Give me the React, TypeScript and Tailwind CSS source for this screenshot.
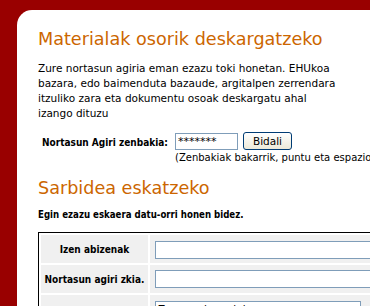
const bold = { fontFamily: "'DejaVu Sans Condensed', 'DejaVu Sans', Verdana, sans-serif" };

export default function App() {
  return (
    <div className="h-[306px] w-[370px] overflow-hidden bg-[#990000] pt-[10px] pl-[17px]" style={{ fontFamily: "'DejaVu Sans', Verdana, sans-serif" }}>
      <div className="w-[420px] rounded-tl-[15px] bg-white pl-[21px] pt-[18px] pb-10 text-[10.5px] text-black">
        <h1 className="text-[17.6px] leading-[22px] text-[#cc6600]">Materialak osorik deskargatzeko</h1>
        <p className="mt-[11px] whitespace-nowrap leading-[15px]">
          Zure nortasun agiria eman ezazu toki honetan. EHUkoa
          <br />
          bazara, edo baimenduta bazaude, argitalpen zerrendara
          <br />
          itzuliko zara eta dokumentu osoak deskargatu ahal
          <br />
          izango dituzu
        </p>
        <div className="mt-[11px] flex">
          <div className="w-[137px] whitespace-nowrap pl-[4px] pt-[3px] text-[10px] font-bold" style={bold}>Nortasun Agiri zenbakia:</div>
          <div>
            <div className="flex items-center gap-[5px]">
              <input
                type="text"
                readOnly
                value="*******"
                className="h-[17px] w-[63px] border border-[#7f9db9] px-[2px] text-[11px] outline-none"
                style={{ fontFamily: "'DejaVu Sans', Verdana, sans-serif" }}
              />
              <button className="h-[18px] w-[49px] rounded-[3px] border border-[#003c74] bg-gradient-to-b from-white to-[#ece9d8] text-[10.5px] leading-[16px]">
                Bidali
              </button>
            </div>
            <div className="mt-[2px] whitespace-nowrap text-[10px] leading-[12px]">(Zenbakiak bakarrik, puntu eta espazio gabe)</div>
          </div>
        </div>
        <h2 className="mt-[13px] text-[17.6px] leading-[22px] text-[#cc6600]">Sarbidea eskatzeko</h2>
        <p className="mt-[9px] text-[9.6px] font-bold leading-[14px]" style={bold}>Egin ezazu eskaera datu-orri honen bidez.</p>
        <table className="mt-[10px] w-[360px] border-separate border-spacing-[2px] border border-black">
          <tbody>
            <tr>
              <td className="h-[28px] w-[107px] bg-[#f0f0f0] text-center text-[10px] font-bold whitespace-nowrap" style={bold}>Izen abizenak</td>
              <td className="bg-[#f0f0f0] pl-[5px] pt-[6px] pb-[4px]">
                <div className="h-[18px] w-[216px] border border-[#7f9db9] bg-white"></div>
              </td>
            </tr>
            <tr>
              <td className="h-[28px] bg-[#f0f0f0] text-center text-[10px] font-bold whitespace-nowrap" style={bold}>Nortasun agiri zkia.</td>
              <td className="bg-[#f0f0f0] pl-[5px] pt-[5px] pb-[5px]">
                <div className="h-[18px] w-[216px] border border-[#7f9db9] bg-white"></div>
              </td>
            </tr>
            <tr>
              <td className="h-[60px] bg-[#f0f0f0]"></td>
              <td className="bg-[#f0f0f0] pl-[5px] pt-[6px] align-top">
                <div className="h-[50px] w-[206px] border border-[#7f9db9] bg-white px-[2px] leading-[14px]">Zure azalpenak hemen</div>
              </td>
            </tr>
          </tbody>
        </table>
      </div>
    </div>
  );
}
